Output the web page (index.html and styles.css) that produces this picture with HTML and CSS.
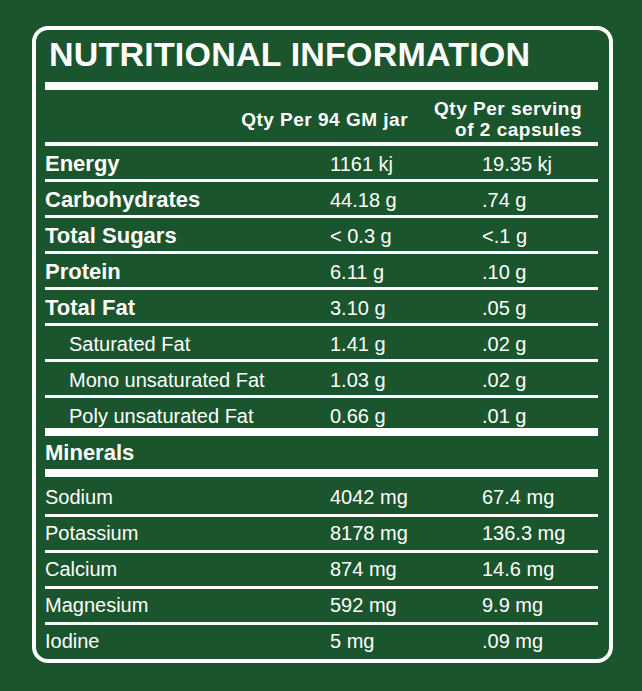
FILE: index.html
```html
<!DOCTYPE html>
<html lang="en">
<head>
<meta charset="utf-8">
<title>Nutritional Information</title>
<link rel="stylesheet" href="styles.css">
</head>
<body>
<div class="panel">
  <h1 class="title">NUTRITIONAL INFORMATION</h1>
  <div class="rule thick"></div>
  <div class="head">
    <div class="hcell">Qty Per 94 GM jar</div>
    <div class="hcell">Qty Per serving<br>of 2 capsules</div>
  </div>
  <div class="rule mid"></div>

  <div class="row bold"><span class="c1">Energy</span><span class="c2">1161 kj</span><span class="c3">19.35 kj</span></div>
  <div class="row bold"><span class="c1">Carbohydrates</span><span class="c2">44.18 g</span><span class="c3">.74 g</span></div>
  <div class="row bold"><span class="c1">Total Sugars</span><span class="c2">&lt; 0.3 g</span><span class="c3">&lt;.1 g</span></div>
  <div class="row bold"><span class="c1">Protein</span><span class="c2">6.11 g</span><span class="c3">.10 g</span></div>
  <div class="row bold"><span class="c1">Total Fat</span><span class="c2">3.10 g</span><span class="c3">.05 g</span></div>
  <div class="row sub"><span class="c1">Saturated Fat</span><span class="c2">1.41 g</span><span class="c3">.02 g</span></div>
  <div class="row sub"><span class="c1">Mono unsaturated Fat</span><span class="c2">1.03 g</span><span class="c3">.02 g</span></div>
  <div class="row sub last"><span class="c1">Poly unsaturated Fat</span><span class="c2">0.66 g</span><span class="c3">.01 g</span></div>
  <div class="rule thick"></div>
  <div class="row bold section"><span class="c1">Minerals</span></div>
  <div class="rule thick"></div>
  <div class="row min first"><span class="c1">Sodium</span><span class="c2">4042 mg</span><span class="c3">67.4 mg</span></div>
  <div class="row min"><span class="c1">Potassium</span><span class="c2">8178 mg</span><span class="c3">136.3 mg</span></div>
  <div class="row min"><span class="c1">Calcium</span><span class="c2">874 mg</span><span class="c3">14.6 mg</span></div>
  <div class="row min"><span class="c1">Magnesium</span><span class="c2">592 mg</span><span class="c3">9.9 mg</span></div>
  <div class="row min end"><span class="c1">Iodine</span><span class="c2">5 mg</span><span class="c3">.09 mg</span></div>
</div>
</body>
</html>
```

FILE: styles.css
```css
html, body {
  margin: 0;
  padding: 0;
  background: #1b552d;
}

body {
  width: 642px;
  height: 691px;
  overflow: hidden;
  font-family: "Liberation Sans", Arial, Helvetica, sans-serif;
  color: #ffffff;
}

.panel {
  box-sizing: border-box;
  margin: 26px 0 0 32px;
  width: 581px;
  height: 637px;
  border: 4px solid #ffffff;
  border-radius: 16px;
  padding: 0 11px 0 9px;
}

.title {
  margin: 0 0 6px;
  padding: 2px 0 0 4px;
  font-size: 34px;
  line-height: 44px;
  font-weight: 700;
  letter-spacing: 0.2px;
}

.rule {
  background: #ffffff;
}

.rule.thick {
  height: 8px;
}

.rule.mid {
  height: 4px;
}

.head {
  box-sizing: border-box;
  height: 52px;
  padding: 6px 16px 0 0;
  display: flex;
  justify-content: flex-end;
  align-items: center;
  gap: 26px;
  font-size: 19px;
  font-weight: 700;
  line-height: 21px;
  letter-spacing: 0.5px;
}

.hcell {
  text-align: right;
}

.row {
  box-sizing: border-box;
  display: flex;
  align-items: baseline;
  height: 36px;
  padding-top: 6px;
  border-bottom: 3px solid #ffffff;
  line-height: 24px;
  font-size: 20px;
}

.c1 {
  width: 285px;
  flex: none;
}

.c2 {
  width: 152px;
  flex: none;
}

.c3 {
  flex: 1;
}

.row.bold .c1 {
  font-size: 22px;
  font-weight: 700;
}

.row.sub .c1 {
  padding-left: 24px;
  box-sizing: border-box;
}

.row.last {
  height: 30px;
  border-bottom: 0;
}

.row.section {
  height: 33px;
  padding-top: 5px;
  border-bottom: 0;
}

.row.min {
  padding-top: 4px;
}

.row.min.first {
  height: 40px;
  padding-top: 8px;
}

.row.min.end {
  height: 34px;
  border-bottom: 0;
}
```
